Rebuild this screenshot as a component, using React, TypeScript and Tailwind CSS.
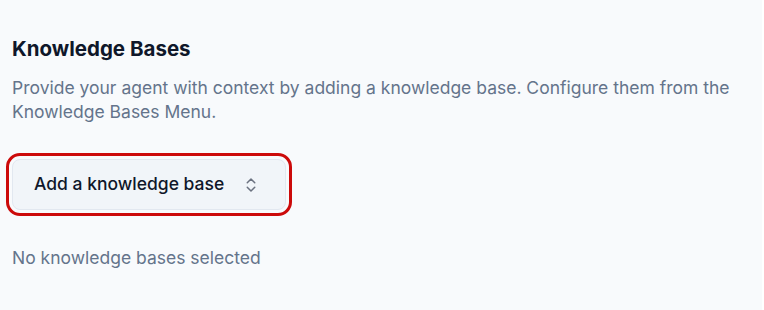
import React from "react";

export default function App() {
  return (
    <div className="flex h-[310px] w-[764px] bg-white" style={{ fontFamily: "Inter, 'Noto Sans', sans-serif" }}>
      <div className="flex h-full w-[762px] flex-col bg-[#f8fafc] px-3 pt-[35px]">
        <h2 className="text-[20.5px] font-bold leading-7 text-[#0f172a]">Knowledge Bases</h2>
        <p className="mt-[13px] text-[17.5px] leading-6 text-[#64748b]">
          Provide your agent with context by adding a knowledge base. Configure them from the Knowledge Bases Menu.
        </p>
        <div className="mt-[35px] flex">
          <button
            type="button"
            className="flex h-[51px] w-[274px] items-center justify-between rounded-lg border border-[#e2e8f0] bg-[#f1f5f9] pl-[21px] pr-[25px] text-[17.5px] font-medium text-[#0f172a] outline outline-[3px] outline-offset-[3px] outline-[#cc0a0a]"
          >
            <span>Add a knowledge base</span>
            <svg width="18" height="18" viewBox="0 0 24 24" fill="none" stroke="#6b7280" strokeWidth="2" strokeLinecap="round" strokeLinejoin="round">
              <path d="m7 15 5 5 5-5" />
              <path d="m7 9 5-5 5 5" />
            </svg>
          </button>
        </div>
        <p className="mt-[36px] text-[17.5px] leading-6 text-[#64748b]">No knowledge bases selected</p>
      </div>
    </div>
  );
}
